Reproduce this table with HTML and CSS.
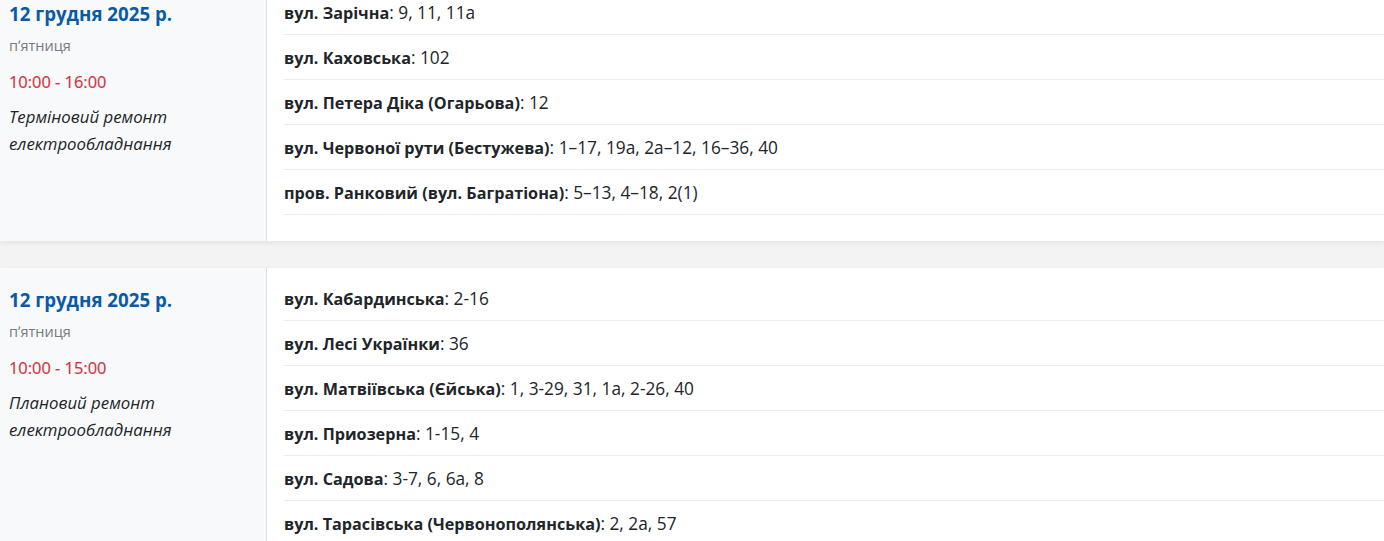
FILE: index.html
```html
<!DOCTYPE html>
<html lang="uk">
<head>
<meta charset="utf-8">
<link rel="stylesheet" href="styles.css">
</head>
<body>
<div class="list">
  <div class="card">
    <div class="info">
      <div class="date">12 грудня 2025 р.</div>
      <div class="weekday">пʼятниця</div>
      <div class="time">10:00 - 16:00</div>
      <div class="reason">Терміновий ремонт електрообладнання</div>
    </div>
    <div class="streets">
      <div class="row"><b>вул. Зарічна</b>: 9, 11, 11а</div>
      <div class="row"><b>вул. Каховська</b>: 102</div>
      <div class="row"><b>вул. Петера Діка (Огарьова)</b>: 12</div>
      <div class="row"><b>вул. Червоної рути (Бестужева)</b>: 1–17, 19а, 2а–12, 16–36, 40</div>
      <div class="row"><b>пров. Ранковий (вул. Багратіона)</b>: 5–13, 4–18, 2(1)</div>
    </div>
  </div>
  <div class="card">
    <div class="info">
      <div class="date">12 грудня 2025 р.</div>
      <div class="weekday">пʼятниця</div>
      <div class="time">10:00 - 15:00</div>
      <div class="reason">Плановий ремонт електрообладнання</div>
    </div>
    <div class="streets">
      <div class="row"><b>вул. Кабардинська</b>: 2-16</div>
      <div class="row"><b>вул. Лесі Українки</b>: 36</div>
      <div class="row"><b>вул. Матвіївська (Єйська)</b>: 1, 3-29, 31, 1а, 2-26, 40</div>
      <div class="row"><b>вул. Приозерна</b>: 1-15, 4</div>
      <div class="row"><b>вул. Садова</b>: 3-7, 6, 6а, 8</div>
      <div class="row"><b>вул. Тарасівська (Червонополянська)</b>: 2, 2а, 57</div>
    </div>
  </div>
</div>
</body>
</html>
```
FILE: styles.css
```css
html, body {
  margin: 0;
  padding: 0;
  background: #f3f3f3;
  font-family: "Open Sans", "Noto Sans", sans-serif;
  color: #212529;
  overflow: hidden;
}
.list {
  display: flex;
  flex-direction: column;
  gap: 27px;
  margin-top: -18px;
}
.card {
  display: flex;
  background: #fff;
  box-shadow: 0 2px 5px rgba(0, 0, 0, 0.07);
}
.info {
  flex: 0 0 257px;
  background: #f8f9fa;
  border-right: 1px solid #dee2e6;
  padding: 21px 0 0 9px;
}
.date {
  font-size: 18.7px;
  line-height: 22px;
  font-weight: 700;
  color: #0b5aa8;
}
.weekday {
  margin-top: 11px;
  font-size: 14.5px;
  line-height: 20px;
  color: #757b82;
}
.time {
  margin-top: 14px;
  font-size: 16.4px;
  line-height: 24px;
  color: #d1343f;
  -webkit-text-stroke: 0.2px #d1343f;
}
.reason {
  margin-top: 9px;
  font-size: 16.8px;
  line-height: 27px;
  font-style: italic;
  color: #212529;
}
.streets {
  flex: 1;
  padding: 8px 0 26px 17px;
}
.row {
  padding: 11px 0 9px;
  font-size: 17.3px;
  line-height: 24px;
  border-bottom: 1px solid #ececec;
}
.row b {
  font-size: 16.2px;
  font-weight: 700;
}
```
